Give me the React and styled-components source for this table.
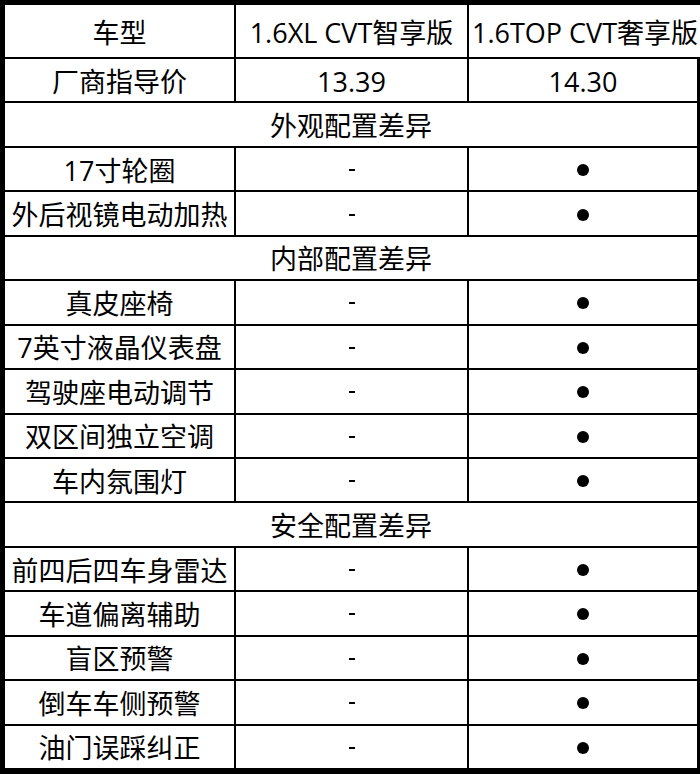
import React from "react";
import styled, { createGlobalStyle } from "styled-components";

const GlobalStyle = createGlobalStyle`
  html, body {
    margin: 0;
    padding: 0;
    background: #ffffff;
    overflow: hidden;
  }
  body {
    font-family: "Open Sans", "Noto Sans CJK SC", sans-serif;
    color: #000;
  }
`;

const Table = styled.div`
  box-sizing: border-box;
  width: 700px;
  height: 774px;
  display: flex;
  flex-direction: column;
  border-top: 5px solid #000;
  border-left: 5px solid #000;
  border-bottom: 4px solid #000;
  background: #fff;
`;

const Row = styled.div`
  display: grid;
  grid-template-columns: ${(p) => (p.$section ? "1fr" : "231px 233px 231px")};
  flex: ${(p) => (p.$header ? "0 0 54px" : "1 1 0")};
  min-height: 0;
`;

const Cell = styled.div`
  box-sizing: border-box;
  display: flex;
  align-items: center;
  justify-content: ${(p) => (p.$left ? "flex-start" : "center")};
  padding-left: ${(p) => (p.$left ? "3px" : "0")};
  padding-top: 2px;
  white-space: nowrap;
  overflow: visible;
  font-size: 27px;
  line-height: 1;
  border-bottom: 2px solid #000;
  border-right: ${(p) => (p.$open ? "0" : `${p.$edge ? 3 : 2}px solid #000`)};
`;

const Dot = styled.span`
  display: block;
  width: 12px;
  height: 12px;
  border-radius: 50%;
  background: #000;
`;

const Dash = styled.span`
  display: block;
  width: 6px;
  height: 2px;
  background: #000;
`;

const groups = [
  { title: "外观配置差异", items: ["17寸轮圈", "外后视镜电动加热"] },
  {
    title: "内部配置差异",
    items: ["真皮座椅", "7英寸液晶仪表盘", "驾驶座电动调节", "双区间独立空调", "车内氛围灯"],
  },
  {
    title: "安全配置差异",
    items: ["前四后四车身雷达", "车道偏离辅助", "盲区预警", "倒车车侧预警", "油门误踩纠正"],
  },
];

const App = () => (
  <>
    <GlobalStyle />
    <Table>
      <Row $header>
        <Cell>车型</Cell>
        <Cell>1.6XL CVT智享版</Cell>
        <Cell $left $open>1.6TOP CVT奢享版</Cell>
      </Row>
      <Row>
        <Cell>厂商指导价</Cell>
        <Cell>13.39</Cell>
        <Cell $edge>14.30</Cell>
      </Row>
      {groups.map((g) => (
        <React.Fragment key={g.title}>
          <Row $section>
            <Cell $edge>{g.title}</Cell>
          </Row>
          {g.items.map((name) => (
            <Row key={name}>
              <Cell>{name}</Cell>
              <Cell>
                <Dash />
              </Cell>
              <Cell $edge>
                <Dot />
              </Cell>
            </Row>
          ))}
        </React.Fragment>
      ))}
    </Table>
  </>
);

export default App;
